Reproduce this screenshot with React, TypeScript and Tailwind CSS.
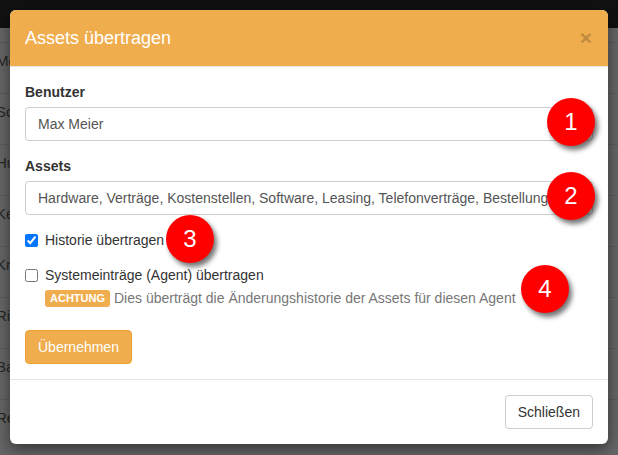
import React from 'react';

const rows = ['Me', 'So', 'Hu', 'Ke', 'Kr', 'Ri', 'Ba', 'Re'];

// Red numbered annotation marker
const Marker = ({ n, className }: { n: number; className: string }) => (
  <div
    className={`absolute w-[48px] h-[48px] rounded-full bg-[#ff0000] flex items-center justify-center text-white text-[24px] leading-none shadow-[3px_4px_5px_rgba(0,0,0,0.55)] ${className}`}
  >
    {n}
  </div>
);

export default function App() {
  return (
    <div className="relative w-[618px] h-[455px] overflow-hidden bg-[#666666] font-['Liberation_Sans',Arial,sans-serif] text-[14px]">
      {/* Page behind the backdrop */}
      <div className="h-[28px] bg-[#111111]" />
      <div className="h-[14px]" />
      {rows.map((r) => (
        <div key={r} className="h-[51px] border-t border-[#5b5b5b] pt-[8px] leading-[20px] text-[15px] text-[#262626] -ml-[4px]">
          {r}
        </div>
      ))}

      {/* Modal */}
      <div className="absolute left-[10px] top-[10px] w-[598px] rounded-[6px] bg-white shadow-[0_5px_15px_rgba(0,0,0,0.5)] overflow-hidden">
        <div className="bg-[#f0ad4e] border-b border-[#e5e5e5] px-[15px] py-[15px] flex items-center justify-between">
          <h4 className="text-white text-[18px] leading-[26px]">Assets übertragen</h4>
          <span className="text-[21px] font-bold leading-none text-[#c08a3e] mr-[1px] -mt-[2px]">×</span>
        </div>

        <div className="p-[15px] text-[#333333]">
          <div className="mb-[15px]">
            <label className="block font-bold leading-[20px] mb-[5px]">Benutzer</label>
            <div className="h-[34px] border border-[#cccccc] rounded-[4px] px-[12px] leading-[32px] text-[#555555]">
              Max Meier
            </div>
          </div>
          <div className="mb-[15px]">
            <label className="block font-bold leading-[20px] mb-[5px]">Assets</label>
            <div className="h-[34px] border border-[#cccccc] rounded-[4px] px-[12px] leading-[32px] text-[#555555] whitespace-nowrap overflow-hidden">
              Hardware, Verträge, Kostenstellen, Software, Leasing, Telefonverträge, Bestellungen
            </div>
          </div>
          <label className="flex items-center gap-[7px] leading-[20px]">
            <input type="checkbox" checked readOnly className="w-[13px] h-[13px] m-0" />
            Historie übertragen
          </label>
          <div className="mt-[15px]">
            <label className="flex items-center gap-[7px] leading-[20px]">
              <input type="checkbox" readOnly className="w-[13px] h-[13px] m-0" />
              Systemeinträge (Agent) übertragen
            </label>
            <div className="pl-[20px] leading-[20px] flex items-center gap-[4px] text-[#777777]">
              <span className="bg-[#f0ad4e] text-white text-[11px] font-bold rounded-[3px] px-[5px] leading-[17px] mt-[3px]">
                ACHTUNG
              </span>
              <span className="mt-[3px]">Dies überträgt die Änderungshistorie der Assets für diesen Agent</span>
            </div>
          </div>
          <button className="mt-[22px] bg-[#f0ad4e] border border-[#eea236] text-white rounded-[4px] px-[12px] h-[34px] leading-[20px]">
            Übernehmen
          </button>
        </div>

        <div className="border-t border-[#e5e5e5] p-[15px] flex justify-end">
          <button className="bg-white border border-[#cccccc] text-[#333333] rounded-[4px] px-[12px] h-[34px] leading-[20px]">
            Schließen
          </button>
        </div>
      </div>

      <Marker n={1} className="left-[547px] top-[98px]" />
      <Marker n={2} className="left-[547px] top-[172px]" />
      <Marker n={3} className="left-[166px] top-[215px]" />
      <Marker n={4} className="left-[521px] top-[265px]" />
    </div>
  );
}
